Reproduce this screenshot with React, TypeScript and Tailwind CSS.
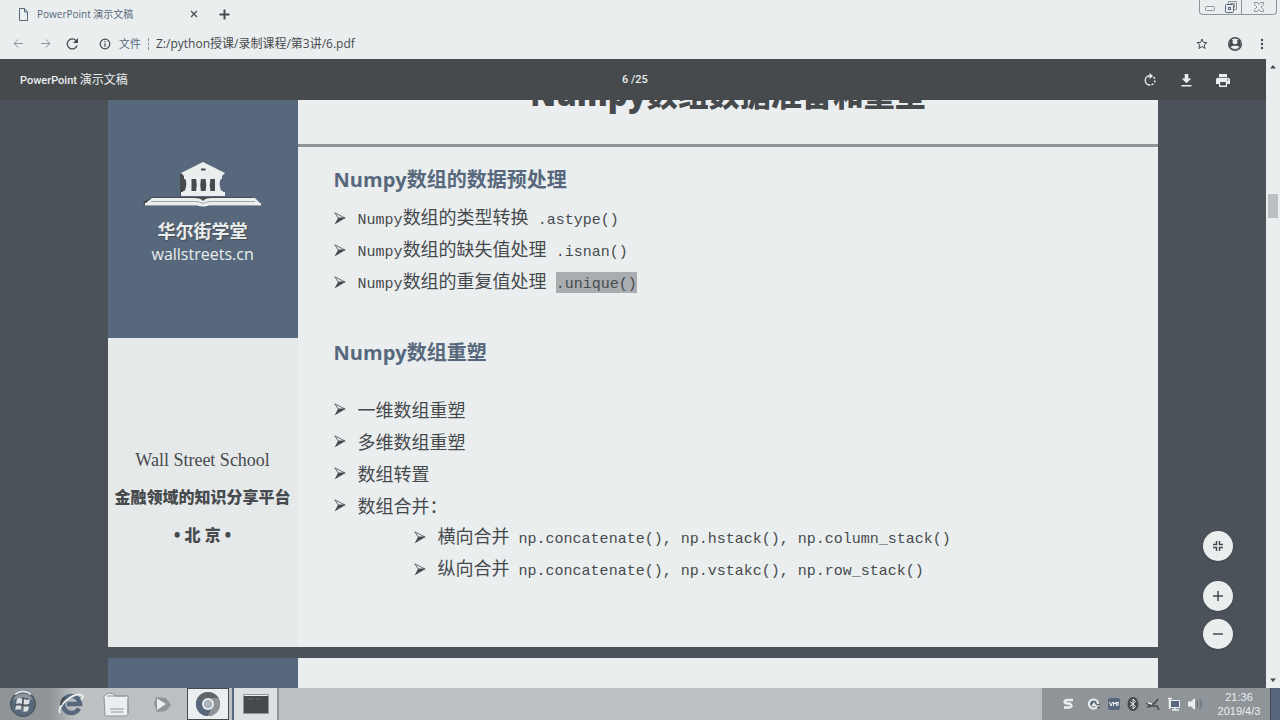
import type { ReactNode } from 'react';

const uiFont = "font-['Open_Sans','Noto_Sans_CJK_SC',sans-serif]";
const robotoFont = "font-['Roboto','Noto_Sans_CJK_SC',sans-serif]";

function WindowControls() {
  return (
    <div className="flex h-[15px] shrink-0 rounded-b border border-t-0 border-[#8f9498] text-[#8f9498]">
      <button aria-label="最小化" className="flex w-5 items-center justify-center">
        <svg width="12" height="14" viewBox="0 0 12 14" fill="none" stroke="currentColor">
          <rect x="1.5" y="6.5" width="9" height="4" rx="1" />
        </svg>
      </button>
      <button aria-label="还原" className="flex w-[22px] items-center justify-center border-r border-[#8f9498]">
        <svg width="14" height="14" viewBox="0 0 14 14" fill="none" stroke="currentColor">
          <path d="M4.500 4V1.500h8v8H10" />
          <path d="M6.500 4V3.500h4v4" />
          <rect x="1.500" y="4.500" width="8" height="8" rx="1" stroke="#57687c" />
          <rect x="4.500" y="7.500" width="2" height="2" stroke="#57687c" />
        </svg>
      </button>
      <button aria-label="关闭" className="flex w-[34px] items-center justify-center">
        <svg width="12" height="12" viewBox="0 0 12 12" fill="none" stroke="currentColor">
          <path d="M1.500 1.500h3L6 3.500l1.500-2h3v2L8 6l2.500 2.500v2h-3L6 8.500l-1.500 2h-3v-2L4 6 1.500 3.500z" />
        </svg>
      </button>
    </div>
  );
}

function TabStrip() {
  return (
    <div className="flex h-7 items-start pl-[18px] pr-[3px]">
      <div className="flex h-7 w-[181px] items-center gap-2">
        <svg width="11" height="13" viewBox="0 0 11 13" fill="none" stroke="#57687c">
          <path d="M1.500 .5h5l3 3.500v8.500h-8zM6.500 .5V4h3" />
        </svg>
        <span className="flex-1 whitespace-nowrap pt-px text-[10px] text-[#57687c]">PowerPoint 演示文稿</span>
        <button aria-label="关闭标签页" className="text-[#474a4d]">
          <svg width="10" height="10" viewBox="0 0 10 10" stroke="currentColor" strokeWidth="1.300">
            <path d="M2 2l6 6M8 2L2 8" />
          </svg>
        </button>
      </div>
      <button aria-label="新标签页" className="ml-5 flex h-7 items-center text-[#474a4d]">
        <svg width="11" height="11" viewBox="0 0 11 11" stroke="currentColor" strokeWidth="2">
          <path d="M5.500 .5v10M.5 5.500h10" />
        </svg>
      </button>
      <div className="flex-1" />
      <WindowControls />
    </div>
  );
}

function AddressBar() {
  return (
    <div className="flex h-[31px] items-center pl-[13px] pr-[14px] text-[#474a4d]">
      <button aria-label="后退" className="text-[#8f9498]">
        <svg width="11" height="11" viewBox="0 0 11 11" fill="none" stroke="currentColor">
          <path d="M10 5.500H1M5 1.500l-4 4 4 4" />
        </svg>
      </button>
      <button aria-label="前进" className="ml-4 text-[#8f9498]">
        <svg width="11" height="11" viewBox="0 0 11 11" fill="none" stroke="currentColor">
          <path d="M1 5.500h9M6 1.500l4 4-4 4" />
        </svg>
      </button>
      <button aria-label="重新加载" className="ml-[15px]">
        <svg width="13" height="12" viewBox="0 0 13 12" fill="none" stroke="currentColor" strokeWidth="1.300">
          <path d="M11 7.500A5 5 0 1 1 10 2.600" />
          <path d="M12 0v5H7z" fill="currentColor" stroke="none" />
        </svg>
      </button>
      <button aria-label="网站信息" className="ml-5">
        <svg width="12" height="12" viewBox="0 0 12 12" fill="none" stroke="currentColor" strokeWidth="1.200">
          <circle cx="6" cy="6" r="4.800" />
          <path d="M6 5.200v3.500M6 3v1.300" />
        </svg>
      </button>
      <label htmlFor="url" className="ml-2 border-r border-dashed border-[#8f9498] pr-[7px] text-[11px] leading-3 text-[#57687c]">
        文件
      </label>
      <input
        id="url"
        className="ml-[7px] min-w-0 flex-1 bg-transparent text-[12px] outline-none"
        defaultValue="Z:/python授课/录制课程/第3讲/6.pdf"
      />
      <button aria-label="收藏">
        <svg width="12" height="12" viewBox="0 0 12 12" fill="none" stroke="#474a4d">
          <path d="M6 1l1.400 3.400 3.600.2-2.800 2.300.9 3.600L6 8.500l-3.100 2 .9-3.600L1 4.600l3.600-.2z" />
        </svg>
      </button>
      <button aria-label="用户" className="ml-5">
        <svg width="14" height="14" viewBox="0 0 14 14">
          <circle cx="7" cy="7" r="6.300" fill="#eaeeef" stroke="#474a4d" strokeWidth="1.400" />
          <path d="M1 6.500h12a6 6 0 0 1-12 0z" fill="#474a4d" />
          <path d="M2 3h10v5H2z" fill="#474a4d" />
          <circle cx="7" cy="4.700" r="2.500" fill="#eaeeef" />
          <path d="M2.700 10C3.300 8.300 10.700 8.300 11.300 10 9.500 12.500 4.500 12.500 2.700 10z" fill="#eaeeef" />
        </svg>
      </button>
      <button aria-label="菜单" className="ml-4">
        <svg width="8" height="12" viewBox="0 0 8 12" fill="#474a4d">
          <circle cx="4" cy="2" r="1.200" />
          <circle cx="4" cy="6" r="1.200" />
          <circle cx="4" cy="10" r="1.200" />
        </svg>
      </button>
    </div>
  );
}

function PdfToolbar() {
  return (
    <header className={`${robotoFont} z-10 grid h-[41px] shrink-0 grid-cols-3 items-center bg-[#474a4d] pl-7 pr-9 pt-px text-[11px] font-medium text-[#eaeeef]`}>
      <h1 className="-ml-2">PowerPoint <span className="text-[12px] font-normal">演示文稿</span></h1>
      <p className="pl-3 text-center">6 /25</p>
      <div className="flex items-center justify-end gap-6">
        <button aria-label="旋转">
          <svg width="13" height="14" viewBox="0 0 13 14" fill="none" stroke="currentColor" strokeWidth="1.400">
            <path d="M5.500 2.800a4.600 4.600 0 1 0 .8 9.200" />
            <path d="M7.500 11.700a4.600 4.600 0 0 0 .7-8.700" strokeDasharray="2.200 1.500" />
            <path d="M5.500 0l3.500 3-3.500 3z" fill="currentColor" stroke="none" />
          </svg>
        </button>
        <button aria-label="下载">
          <svg width="11" height="13" viewBox="0 0 11 13" fill="currentColor">
            <path d="M3.700 0h3.600v4.500h3L5.500 9.200.7 4.500h3zM.5 11h10v1.500H.5z" />
          </svg>
        </button>
        <button aria-label="打印">
          <svg width="14" height="13" viewBox="0 0 14 13" fill="currentColor">
            <path d="M3 0h8v3H3zM2 3.700h10a2 2 0 0 1 2 2V10h-3v3H3v-3H0V5.700a2 2 0 0 1 2-2z" />
            <path d="M4.200 8h5.600v3.500H4.200z" fill="#474a4d" />
            <circle cx="11.700" cy="6" r=".7" fill="#474a4d" />
          </svg>
        </button>
      </div>
    </header>
  );
}

function Logo() {
  return (
    <svg width="120" height="48" viewBox="0 0 120 48">
      <g fill="#474a4d">
        <path d="M37 13h40v22H37zM0 41l10-5h100l6 7v2H2z" />
      </g>
      <g fill="#eaeeef">
        <path d="M60 1l22 11-3 3H41l-3-3z" />
        <path d="M41 14h38v4H41zM40 30h40v3H40zM38 31h44v4H38z" />
        <path d="M42 17h6.500v14H41q4-7 1-14zM53 17h5q-1.500 7 0 14h-5q1.500-7 0-14zM62.500 17h5q-1.500 7 0 14h-5q1.500-7 0-14zM72 17h6q-3 7 1 14h-7z" />
        <path d="M9 37h42q7 0 9 3 2-3 9-3h43l5 5H65q-3 2-5 2t-5-2H3z" />
        <path d="M2 42h54q4 2 8 0h54v2.500H66q-6 2-12 0H2z" />
      </g>
      <path d="M58 8.500h4.500" stroke="#474a4d" strokeWidth="2" />
      <path d="M8 40.500h44q5 0 8 2 3-2 8-2h44" fill="none" stroke="#8f9498" strokeWidth=".8" />
    </svg>
  );
}

function Arrow() {
  return (
    <svg className="shrink-0" width="12" height="13" viewBox="0 0 12 13">
      <path d="M.8 .8L11 6H4.200z" fill="#eaeeef" stroke="#474a4d" strokeWidth=".8" />
      <path d="M11.800 5.700L.5 12.500l3.500-6.500z" fill="#474a4d" />
    </svg>
  );
}

function Code({ children }: { children: ReactNode }) {
  return <span className="whitespace-pre font-['Liberation_Mono',monospace] text-[15px]">{children}</span>;
}

function Bullet({ children, nested = false }: { children: ReactNode; nested?: boolean }) {
  return (
    <li className={nested ? 'ml-20 flex h-8 items-center gap-3' : 'flex h-8 items-center gap-3'}>
      <Arrow />
      <span className="whitespace-nowrap font-['Noto_Sans_CJK_SC',sans-serif] text-[18px] leading-8">{children}</span>
    </li>
  );
}

function SlideHeading({ children }: { children: ReactNode }) {
  return <h3 className="text-[20px] font-bold leading-8 text-[#57687c]">{children}</h3>;
}

function Slide() {
  return (
    <article className="mx-auto -mt-11 flex h-[591px] w-[83%] shrink-0 bg-[#eaeeef] text-[#474a4d]">
      <aside className="flex w-[190px] shrink-0 flex-col bg-[#e5e9ea] text-center">
        <div className="flex h-[282px] flex-col items-center bg-[#57687c] pt-[105px] text-[#eaeeef]">
          <Logo />
          <p className="mt-2 text-[18px] font-bold leading-7 [text-shadow:1px_1px_1px_#474a4d]">华尔街学堂</p>
          <p className="text-[16px] leading-[18px]">wallstreets.cn</p>
        </div>
        <div className="flex flex-col pt-[103px]">
          <p className="font-['Liberation_Serif',serif] text-[18px] leading-[38px]">Wall Street School</p>
          <p className="whitespace-nowrap text-[16px] font-black leading-[37px]">金融领域的知识分享平台</p>
          <p className="text-[16px] font-black leading-[38px]">• 北 京 •</p>
        </div>
      </aside>
      <section className="min-w-0 flex-1">
        <h2 className="flex h-[91px] items-end justify-center border-b-[3px] border-[#8f9498] pb-8 text-[31px] font-extrabold leading-[36px]">
          Numpy数组数据准备和重塑
        </h2>
        <div className="pl-9 pt-[17px]">
          <SlideHeading>Numpy数组的数据预处理</SlideHeading>
          <ul className="pt-[6px]">
            <Bullet><Code>Numpy</Code>数组的类型转换<Code> .astype()</Code></Bullet>
            <Bullet><Code>Numpy</Code>数组的缺失值处理<Code> .isnan()</Code></Bullet>
            <Bullet>
              <Code>Numpy</Code>数组的重复值处理<Code> </Code>
              <mark className="inline-block bg-[#a9adb0] leading-[17px] text-[#474a4d]"><Code>.unique()</Code></mark>
            </Bullet>
          </ul>
          <div className="pt-[39px]">
            <SlideHeading>Numpy数组重塑</SlideHeading>
          </div>
          <ul className="pt-6">
            <Bullet>一维数组重塑</Bullet>
            <Bullet>多维数组重塑</Bullet>
            <Bullet>数组转置</Bullet>
            <Bullet>数组合并：</Bullet>
            <Bullet nested>横向合并<Code> np.concatenate(), np.hstack(), np.column_stack()</Code></Bullet>
            <Bullet nested>纵向合并<Code> np.concatenate(), np.vstakc(), np.row_stack()</Code></Bullet>
          </ul>
        </div>
      </section>
    </article>
  );
}

function RoundButton({ label, d }: { label: string; d: string }) {
  return (
    <button aria-label={label} className="flex size-[30px] items-center justify-center rounded-full bg-[#eaeeef] text-[#474a4d] shadow">
      <svg width="12" height="12" viewBox="0 0 12 12" fill="none" stroke="currentColor" strokeWidth="1.500">
        <path d={d} />
      </svg>
    </button>
  );
}

function Scrollbar() {
  return (
    <div className="flex w-[14px] shrink-0 flex-col items-center bg-[#eaeeef] py-[5px]">
      <svg width="6" height="5" viewBox="0 0 6 5" fill="#474a4d"><path d="M3 1l3 3.500H0z" /></svg>
      <div className="mt-[125px] h-6 w-[10px] bg-[#bcc0c3]" />
      <div className="flex-1" />
      <svg width="6" height="5" viewBox="0 0 6 5" fill="#474a4d"><path d="M0 .5h6L3 4z" /></svg>
    </div>
  );
}

function TaskButton({ label, active = false, children }: { label: string; active?: boolean; children: ReactNode }) {
  return (
    <button
      aria-label={label}
      className={
        active
          ? 'flex h-8 w-[42px] items-center justify-center border border-[#474a4d] bg-[#eaeeef]'
          : 'flex h-8 w-[46px] items-center justify-center'
      }
    >
      {children}
    </button>
  );
}

function Taskbar() {
  return (
    <footer className="flex h-8 shrink-0 items-center bg-[#bcc0c3]">
      <div className="flex flex-1 items-center self-stretch bg-[linear-gradient(90deg,#8f9498_50px,#bcc0c3_75px)]">
        <TaskButton label="开始">
          <svg width="28" height="28" viewBox="0 0 28 28">
            <circle cx="14" cy="14" r="12.500" fill="#57687c" stroke="#474a4d" />
            <path d="M4 10a11 11 0 0 1 20 0q-10-5-20 0z" fill="#8f9498" />
            <path d="M6 4.500a12.500 12.500 0 0 1 16 0" fill="none" stroke="#eaeeef" strokeWidth="1.500" />
            <path d="M8 9q3-2 5.500 0l-.8 5Q10 12.500 7 14zM15 9q3 2 6 0l-1 5q-3 2-6 .5zM7 15.500q3-1.500 5.500 0l-.8 4.500q-2.500-1.500-5.500 0zM14 16q3 1.500 6 0l-1 5q-3 1.500-6 0z" fill="#dce0e1" />
            <path d="M14 7v14M6 15h15" stroke="#474a4d" />
          </svg>
        </TaskButton>
        <div className="w-[2px]" />
        <TaskButton label="Internet Explorer">
          <svg width="26" height="26" viewBox="0 0 26 26" fill="none">
            <path d="M21 17.500A8.500 8.500 0 1 1 22 13H9" stroke="#57687c" strokeWidth="4.500" />
            <path d="M2 22C-2 16 15 1 24 4c2 1 0 4-1 5" stroke="#eaeeef" strokeWidth="1.800" />
            <path d="M7 6Q3 9 3 14" stroke="#474a4d" strokeWidth="2" />
          </svg>
        </TaskButton>
        <TaskButton label="文件资源管理器">
          <svg width="28" height="25" viewBox="0 0 28 25">
            <path d="M1 4l4-3 6 1 1 2h13v18l-2 2H2z" fill="#eaeeef" stroke="#8f9498" />
            <path d="M4 4h18M7 17h14M8 20h12M25 7v14" stroke="#8f9498" />
          </svg>
        </TaskButton>
        <TaskButton label="媒体播放器">
          <svg width="20" height="24" viewBox="0 0 20 24">
            <path d="M3 5l10 1 5 7-5 6-9 1-3-8z" fill="#8f9498" />
            <path d="M4 6.500l9 5.500-9 6z" fill="#eaeeef" />
          </svg>
        </TaskButton>
        <div className="w-px" />
        <TaskButton label="Chrome" active>
          <svg width="26" height="26" viewBox="0 0 26 26">
            <circle cx="13" cy="13" r="12" fill="#57687c" />
            <path d="M2.600 7a12 12 0 0 1 20.800 0L18 11H8z" fill="#626669" />
            <path d="M23.400 7A12 12 0 0 1 13 25l5-12-2-6z" fill="#8f9498" />
            <path d="M2.600 7L9 16l4 9A12 12 0 0 1 2.600 7z" fill="#57687c" />
            <circle cx="13" cy="13" r="6" fill="#eaeeef" />
            <circle cx="13" cy="13" r="4.300" fill="#a9b4bf" />
          </svg>
        </TaskButton>
        <div className="flex h-8 w-[50px] items-center justify-end border-r-2 border-[#8f9498]">
          <button aria-label="命令提示符" className="flex h-8 w-[45px] items-center justify-center border-l-2 border-[#57687c] bg-[#dce0e1]">
            <svg width="26" height="20" viewBox="0 0 26 20">
              <path d="M.5 .5h25v19H.5z" fill="#474a4d" stroke="#8f9498" />
              <path d="M1 1.500h24" stroke="#eaeeef" />
              <path d="M4 5h7M13 5h5" stroke="#57687c" />
            </svg>
          </button>
        </div>
      </div>
      <div className="flex items-center self-stretch bg-[#8f9498] pl-5">
        <div className="flex items-center gap-[7px]">
          <svg className="mr-1" width="13" height="12" viewBox="0 0 13 12" fill="none" stroke="#eaeeef" strokeWidth="2.500">
            <path d="M11 2H5Q1 3 3.500 5l5 1Q11 9 7 9.500H2" />
          </svg>
          <svg width="15" height="14" viewBox="0 0 15 14" fill="none">
            <circle cx="7.500" cy="7" r="4.500" fill="#57687c" stroke="#eaeeef" strokeWidth="2.200" />
            <path d="M5 9.500L8 5l3 4.500z" fill="#eaeeef" />
            <path d="M11 8l3-1M11 10l3 1" stroke="#474a4d" />
          </svg>
          <svg width="12" height="12" viewBox="0 0 12 12" fill="none">
            <rect width="12" height="12" rx="2" fill="#57687c" />
            <path d="M1.500 4l1.500 4 1.500-4M5.500 8V4l1.500 2 1.500-2v4M9 4.500h2M10 4v4" stroke="#eaeeef" />
          </svg>
          <svg width="12" height="14" viewBox="0 0 12 14" fill="none">
            <ellipse cx="6" cy="7" rx="5.500" ry="7" fill="#474a4d" />
            <path d="M3 4.500l5.500 5L6 12V2l2.500 2.500-5.500 5" stroke="#eaeeef" />
          </svg>
          <svg width="14" height="13" viewBox="0 0 14 13" fill="none" stroke="#474a4d" strokeWidth="1.600">
            <path d="M12 1L8 6H2l3 2h6l2 4M1 9l4-1" />
            <path d="M2 5l4 1" stroke="#eaeeef" />
          </svg>
          <svg width="14" height="14" viewBox="0 0 14 14" fill="none">
            <path d="M3.500 3.500h9v7h-9z" fill="#57687c" stroke="#eaeeef" />
            <path d="M1 1.500h4M2.500 1v11M5 13h7M8 10v3" stroke="#eaeeef" strokeWidth="1.500" />
          </svg>
          <svg width="15" height="14" viewBox="0 0 15 14" fill="none">
            <path d="M0 4.500h3L7 1v12L3 9.500H0z" fill="#eaeeef" />
            <path d="M9 4q2 3 0 6M11.500 2q3.500 5 0 10" stroke="#57687c" />
          </svg>
        </div>
        <time className="ml-3 w-12 whitespace-nowrap text-center font-['Liberation_Sans',sans-serif] text-[11px] leading-[14px] text-[#eaeeef]">
          21:36<br />2019/4/3
        </time>
        <button aria-label="显示桌面" className="ml-[7px] h-8 w-[10px] border-l border-[#474a4d] bg-[#57687c]" />
      </div>
    </footer>
  );
}

export default function App() {
  return (
    <div className={`${uiFont} flex h-screen flex-col overflow-hidden bg-[#eaeeef]`}>
      <nav className="shrink-0">
        <TabStrip />
        <AddressBar />
      </nav>
      <div className="flex min-h-0 flex-1">
        <main className="relative flex min-w-0 flex-1 flex-col bg-[#4b525a]">
          <PdfToolbar />
          <div className="flex min-h-0 flex-1 flex-col overflow-hidden">
            <Slide />
            <article className="mx-auto mt-[11px] flex w-[83%] flex-1 bg-[#eaeeef]">
              <aside className="w-[190px] bg-[#57687c]" />
            </article>
          </div>
          <div className="absolute bottom-[39px] right-[33px] flex flex-col gap-2">
            <RoundButton label="适合页面" d="M4.500 1v3.500H1M7.500 1v3.500H11M4.500 11V7.500H1M7.500 11V7.500H11" />
            <div className="h-1" />
            <RoundButton label="放大" d="M6 1v10M1 6h10" />
            <RoundButton label="缩小" d="M1 6h10" />
          </div>
        </main>
        <Scrollbar />
      </div>
      <Taskbar />
    </div>
  );
}
